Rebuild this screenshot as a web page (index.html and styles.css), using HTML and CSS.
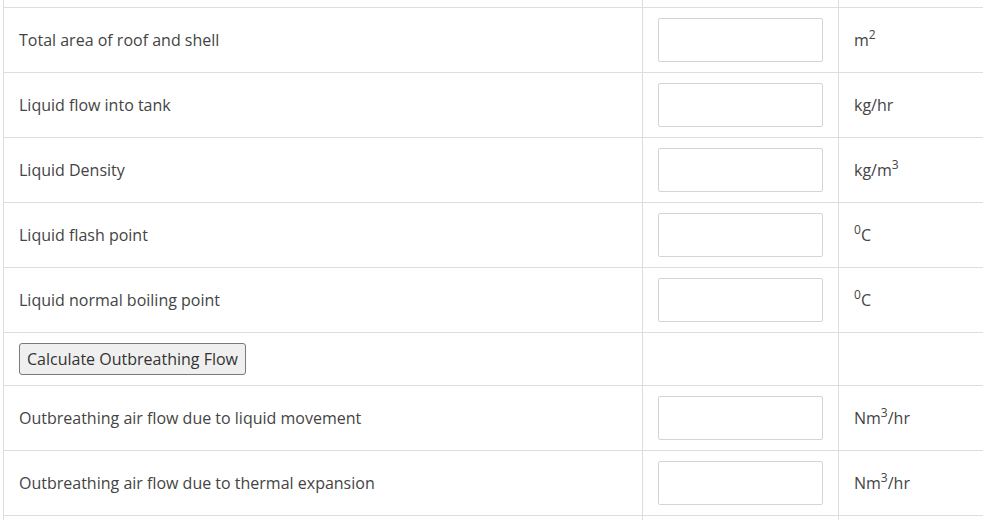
FILE: index.html
```html
<!DOCTYPE html>
<html>
<head>
<meta charset="utf-8">
<link rel="stylesheet" href="styles.css">
</head>
<body>
<table class="calc">
  <colgroup><col class="c1"><col class="c2"><col class="c3"></colgroup>
  <tr class="prev"><td></td><td></td><td></td></tr>
  <tr><td class="label">Total area of roof and shell</td><td class="field"><input class="box" type="text"></td><td class="unit">m<sup>2</sup></td></tr>
  <tr><td class="label">Liquid flow into tank</td><td class="field"><input class="box" type="text"></td><td class="unit">kg/hr</td></tr>
  <tr><td class="label">Liquid Density</td><td class="field"><input class="box" type="text"></td><td class="unit">kg/m<sup>3</sup></td></tr>
  <tr><td class="label">Liquid flash point</td><td class="field"><input class="box" type="text"></td><td class="unit"><sup>0</sup>C</td></tr>
  <tr><td class="label">Liquid normal boiling point</td><td class="field"><input class="box" type="text"></td><td class="unit"><sup>0</sup>C</td></tr>
  <tr class="btnrow"><td class="label"><button class="calc-btn" type="button">Calculate Outbreathing Flow</button></td><td></td><td></td></tr>
  <tr><td class="label">Outbreathing air flow due to liquid movement</td><td class="field"><input class="box" type="text"></td><td class="unit">Nm<sup>3</sup>/hr</td></tr>
  <tr><td class="label">Outbreathing air flow due to thermal expansion</td><td class="field"><input class="box" type="text"></td><td class="unit">Nm<sup>3</sup>/hr</td></tr>
  <tr class="next"><td></td><td></td><td></td></tr>
</table>
</body>
</html>
```
FILE: styles.css
```css
html, body {
  margin: 0;
  padding: 0;
  background: #fff;
  overflow: hidden;
}
body {
  font-family: "Open Sans", "Liberation Sans", sans-serif;
  font-size: 16px;
  color: #444;
  padding-left: 3px;
}
.calc {
  border-collapse: collapse;
  width: 980px;
  table-layout: fixed;
}
.calc col.c1 { width: 639px; }
.calc col.c2 { width: 196px; }
.calc td {
  border: 1px solid #ddd;
  border-right: none;
  padding: 0 15px;
  height: 64px;
  vertical-align: middle;
}
.calc td + td { border-left: 1px solid #ddd; }
.calc tr.prev td {
  height: 7px;
  border-top: none;
  padding-top: 0;
  padding-bottom: 0;
}
.calc tr.btnrow td { height: 52px; }
.calc tr.next td { height: 20px; }
.box {
  display: block;
  box-sizing: border-box;
  width: 165px;
  height: 44px;
  border: 1px solid #d4d4d4;
  border-radius: 2px;
  background: #fff;
  margin: 0;
}
.unit sup {
  font-size: 12px;
  line-height: 0;
  vertical-align: 7px;
}
.calc-btn {
  font-family: "Open Sans", "Liberation Sans", sans-serif;
  font-size: 16px;
  color: #333;
  background: #efefef;
  border: 1px solid #7a7a7a;
  border-radius: 3px;
  height: 32px;
  padding: 0 7px;
  margin: 0;
}
```
